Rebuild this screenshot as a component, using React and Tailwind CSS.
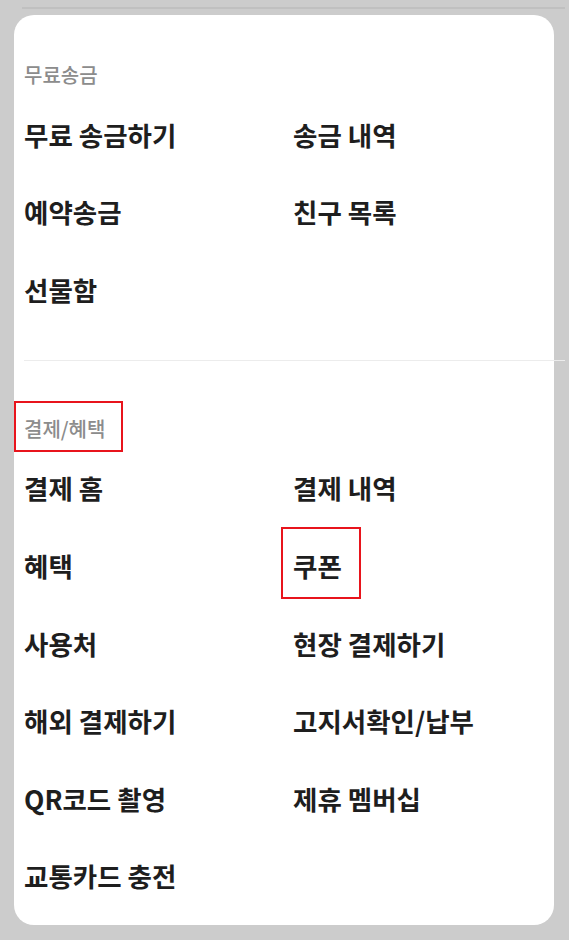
const sections = [
  {
    title: '무료송금',
    items: ['무료 송금하기', '송금 내역', '예약송금', '친구 목록', '선물함'],
  },
  {
    title: '결제/혜택',
    marked: true,
    items: [
      '결제 홈',
      '결제 내역',
      '혜택',
      '쿠폰',
      '사용처',
      '현장 결제하기',
      '해외 결제하기',
      '고지서확인/납부',
      'QR코드 촬영',
      '제휴 멤버십',
      '교통카드 충전',
    ],
  },
];

const font = { fontFamily: '"Noto Sans CJK KR", "Noto Sans", sans-serif' };

export default function App() {
  return (
    <div className="min-h-[940px] w-[569px] bg-[#cccccc] pt-[7px]" style={font}>
      <div className="ml-[22px] h-[2px] w-[543px] bg-[#c0c0c0]" />
      <div className="ml-[14px] mt-[6px] w-[540px] rounded-[20px] bg-white pl-[10px] pb-[10px] pt-[45px]">
        {sections.map((section, si) => (
          <div key={section.title}>
            {si > 0 && <div className="mr-[-11px] mt-[31px] mb-[53px] h-px bg-[#ececec]" />}
            <div className="relative h-[30px] text-[20px] leading-[30px] font-medium text-[#8c8c8c]">
              {section.title}
              {section.marked && (
                <span className="absolute left-[-10px] top-[-13px] h-[51px] w-[109px] border-2 border-[#e8141c]" />
              )}
            </div>
            <div className="mt-[6px] grid grid-cols-[269px_1fr]">
              {section.items.map((item) => (
                <div key={item} className="flex h-[77.6px] items-center">
                  <span className="relative text-[26.5px] font-bold leading-none text-[#1e1e1e]">
                    {item}
                    {item === '쿠폰' && (
                      <span className="absolute left-[-12px] top-[-26px] h-[72px] w-[80px] border-2 border-[#e8141c]" />
                    )}
                  </span>
                </div>
              ))}
            </div>
          </div>
        ))}
      </div>
    </div>
  );
}
